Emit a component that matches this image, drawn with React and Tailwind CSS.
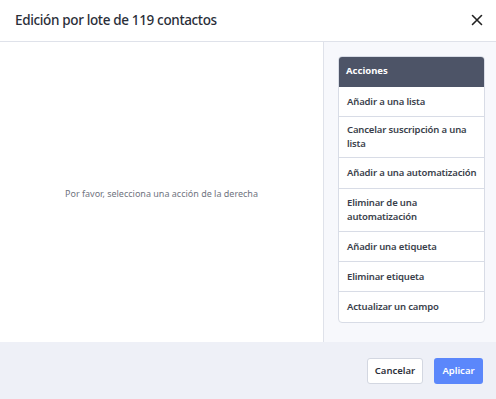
import React from "react";

const items = [
  ["Añadir a una lista", "h-[30px]"],
  ["Cancelar suscripción a una lista", "h-[41px]"],
  ["Añadir a una automatización", "h-[31px]"],
  ["Eliminar de una automatización", "h-[43px]"],
  ["Añadir una etiqueta", "h-[30px]"],
  ["Eliminar etiqueta", "h-[30px]"],
  ["Actualizar un campo", "h-[30px]"],
];

export default function App() {
  return (
    <div className="w-[496px] h-[399px] bg-white flex flex-col overflow-hidden" style={{ fontFamily: '"Noto Sans", sans-serif' }}>
      <div className="h-[42px] flex items-center justify-between pl-[15px] pr-[13px] border-b border-[#dfe2ea] shrink-0">
        <div className="text-[13.5px] font-medium text-[#2a2e38] tracking-[-0.35px]">Edición por lote de 119 contactos</div>
        <svg width="12" height="12" viewBox="0 0 12 12" className="mt-[-2px]">
          <path d="M1.5 1.5 L10.5 10.5 M10.5 1.5 L1.5 10.5" stroke="#222" strokeWidth="1.6" strokeLinecap="round" />
        </svg>
      </div>
      <div className="flex h-[300px] shrink-0">
        <div className="w-[324px] flex items-center justify-center border-r border-[#dfe2ea] text-[9px] text-[#6f7480] pt-[3px]">
          Por favor, selecciona una acción de la derecha
        </div>
        <div className="flex-1 bg-[#f7f8fc] pt-[14px] pl-[14px] pr-[11px]">
          <div className="rounded-[4px] border border-[#d8dce6] bg-white overflow-hidden">
            <div className="h-[31px] bg-[#4d5467] text-white text-[9.5px] font-bold flex items-center pl-[8px] mt-[-1px] mx-[-1px] rounded-t-[4px]">
              Acciones
            </div>
            {items.map(([t, h], i) => (
              <div key={i} className={`${h} flex items-center pl-[8px] pr-[2px] text-[9.5px] tracking-[-0.15px] leading-[14px] font-semibold text-[#3a3f4b] ${i < items.length - 1 ? "border-b border-[#d8dce6]" : ""}`}>
                <span className={i === 1 ? "pr-[8px]" : i === 3 ? "pr-[40px]" : ""}>{t}</span>
              </div>
            ))}
          </div>
        </div>
      </div>
      <div className="flex-1 bg-[#eef0f7] flex items-center justify-end gap-[11px] pr-[13px] pt-[1px]">
        <button className="h-[26px] w-[56px] rounded-[3px] border border-[#d3d7e1] bg-white text-[9.5px] font-semibold text-[#2d313b]">Cancelar</button>
        <button className="h-[26px] w-[49px] rounded-[3px] bg-[#5b87fb] text-[9.5px] font-semibold text-white">Aplicar</button>
      </div>
    </div>
  );
}
